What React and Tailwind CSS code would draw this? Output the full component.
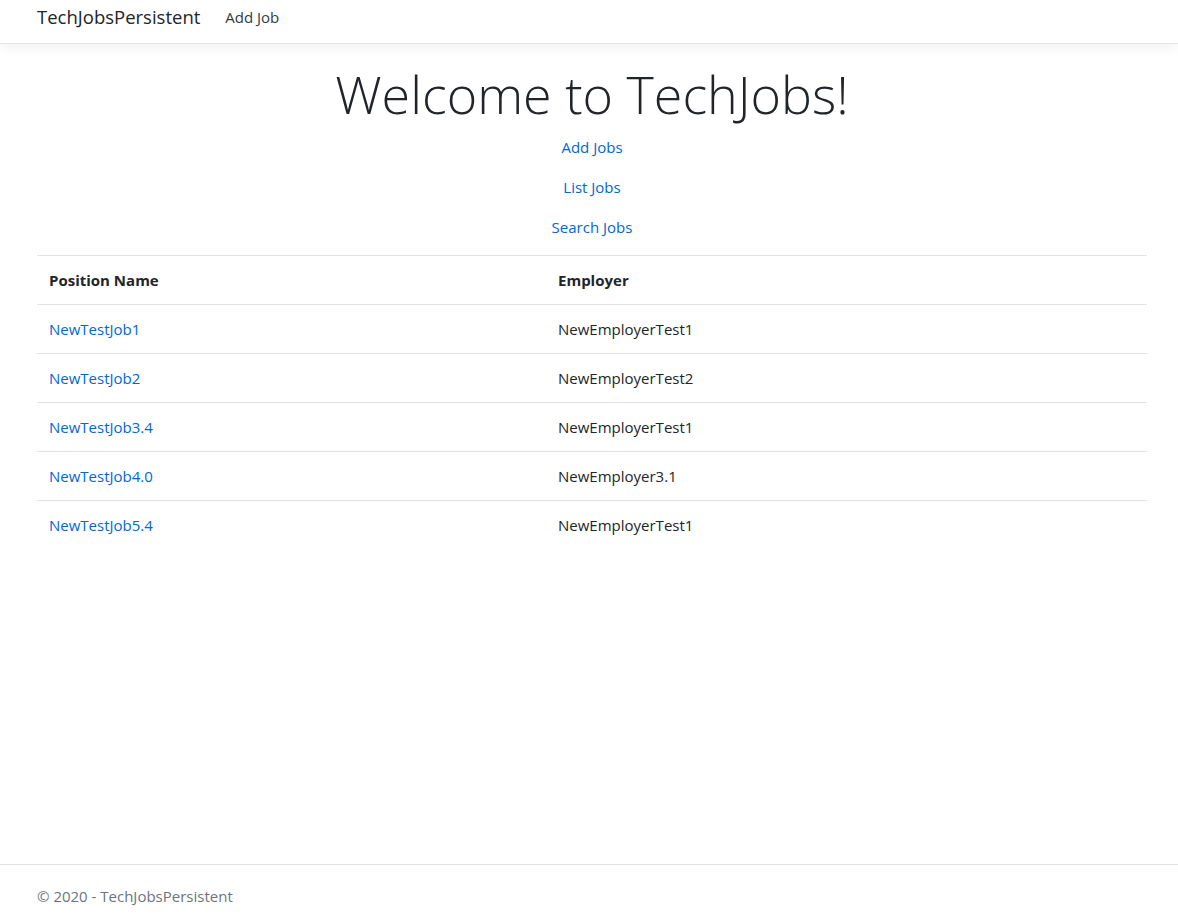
const jobs = [
  { name: 'NewTestJob1', employer: 'NewEmployerTest1' },
  { name: 'NewTestJob2', employer: 'NewEmployerTest2' },
  { name: 'NewTestJob3.4', employer: 'NewEmployerTest1' },
  { name: 'NewTestJob4.0', employer: 'NewEmployer3.1' },
  { name: 'NewTestJob5.4', employer: 'NewEmployerTest1' },
]

export default function App() {
  return (
    <div className="flex min-h-screen flex-col bg-white font-['Open_Sans',sans-serif] text-[15px] leading-6 text-[#212529]">
      <header className="mb-[17px] h-[44px] border-b border-[#e5e5e5] bg-white shadow-[0_4px_12px_rgba(0,0,0,0.05)]">
        <nav className="ml-[37px] mr-[31px] flex h-[43px] items-start pt-[5px]">
          <a href="#" className="text-[18.5px] leading-6 text-[#212529]">TechJobsPersistent</a>
          <a href="#" className="ml-[25px] text-[15px] text-[#343a40]">Add Job</a>
        </nav>
      </header>

      <main className="ml-[37px] mr-[31px] pb-3">
        <div className="text-center">
          <h1 className="mb-2 text-[52px] font-light leading-[66px]">Welcome to TechJobs!</h1>
          <p className="mb-4"><a href="#" className="text-[#0366d6]">Add Jobs</a></p>
          <p className="mb-4"><a href="#" className="text-[#0366d6]">List Jobs</a></p>
          <p className="mb-4"><a href="#" className="text-[#0366d6]">Search Jobs</a></p>
        </div>

        <table className="w-full border-collapse text-left">
          <tbody>
            <tr className="border-t border-[#dee2e6]">
              <th className="w-[509px] p-3 font-bold">Position Name</th>
              <th className="p-3 font-bold">Employer</th>
            </tr>
            {jobs.map((job) => (
              <tr key={job.name} className="border-t border-[#dee2e6]">
                <td className="p-3"><a href="#" className="text-[#0366d6]">{job.name}</a></td>
                <td className="p-3">{job.employer}</td>
              </tr>
            ))}
          </tbody>
        </table>
      </main>

      <footer className="mt-auto h-[53px] border-t border-[#dee2e6]">
        <div className="ml-[37px] pt-[19px] text-[#6c757d]">© 2020 - TechJobsPersistent</div>
      </footer>
    </div>
  )
}
